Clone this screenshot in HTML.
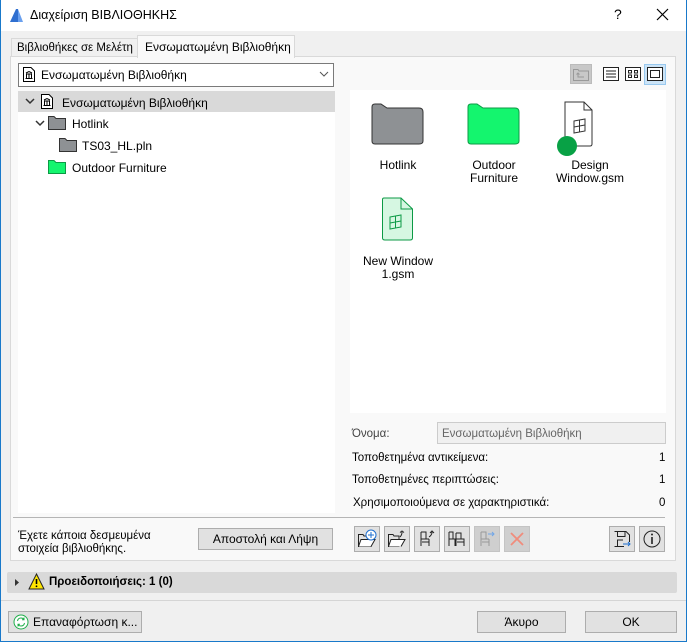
<!DOCTYPE html>
<html><head><meta charset="utf-8"><style>
*{margin:0;padding:0;box-sizing:border-box}
body{width:687px;height:642px;background:#f0f0f0;font-family:"Liberation Sans","DejaVu Sans",sans-serif;font-size:11.5px;color:#000;position:relative;overflow:hidden}
.a{position:absolute}
.btn{position:absolute;background:#e1e1e1;border:1px solid #adadad;text-align:center;font-size:12px}
.ib{position:absolute;width:26px;height:26px;background:#e1e1e1;border:1px solid #adadad;top:526px}
.ib svg{position:absolute;left:2px;top:2px}
.t{position:absolute;white-space:nowrap}
.c{position:absolute;text-align:center;font-size:12px;line-height:13px;width:90px}
</style></head><body>
<div class="a" style="left:0;top:0;width:687px;height:642px;border:1px solid #1979ca;border-top:none"></div>
<div class="a" style="left:1px;top:0;width:685px;height:31px;background:#fff"></div>
<svg class="a" style="left:9px;top:8px" width="15" height="15"><path d="M1 14 L7 1 L9 1 L9 14Z" fill="#2f6fd0"/><path d="M9 1 L14 14 L9 14Z" fill="#6aa0ee"/></svg>
<div class="t" style="left:30px;top:8px;font-size:12.5px">Διαχείριση ΒΙΒΛΙΟΘΗΚΗΣ</div>
<div class="t" style="left:614px;top:6px;font-size:14px">?</div>
<svg class="a" style="left:656px;top:8px" width="13" height="13"><path d="M1 1L12 12M12 1L1 12" stroke="#000" stroke-width="1.2"/></svg>

<div class="a" style="left:11px;top:38px;width:127px;height:19px;background:#f0f0f0;border:1px solid #d9d9d9;border-bottom:none"></div>
<div class="t" style="left:17px;top:42px">Βιβλιοθήκες σε Μελέτη</div>
<div class="a" style="left:10px;top:56px;width:666px;height:505px;background:#f9f9f9;border:1px solid #d9d9d9"></div>
<div class="a" style="left:137px;top:35px;width:158px;height:23px;background:#f9f9f9;border:1px solid #d9d9d9;border-bottom:none"></div>
<div class="t" style="left:145px;top:40px;font-size:12px">Ενσωματωμένη Βιβλιοθήκη</div>

<div class="a" style="left:18px;top:63px;width:316px;height:24px;background:#fff;border:1px solid #7a7a7a"></div>
<svg class="a" style="left:23px;top:67px" width="12" height="15"><path d="M.5 .5H8L11.5 4V14.5H.5Z" fill="#fff" stroke="#000"/><path d="M3 6L6 4.5L9 6M3 7H9M3.5 7.5V11M6 7.5V11M8.5 7.5V11M2.5 11.5H9.5" stroke="#000" fill="none"/></svg>
<div class="t" style="left:41px;top:68px;font-size:12px">Ενσωματωμένη Βιβλιοθήκη</div>
<svg class="a" style="left:319px;top:71px" width="10" height="7"><path d="M1 1L5 5L9 1" stroke="#555" fill="none"/></svg>

<div class="a" style="left:18px;top:91px;width:317px;height:422px;background:#fff"></div>
<div class="a" style="left:18px;top:91px;width:317px;height:21px;background:#d9d9d9"></div>
<svg class="a" style="left:25px;top:98px" width="10" height="7"><path d="M1 1L5 5L9 1" stroke="#333" stroke-width="1.5" fill="none"/></svg>
<svg class="a" style="left:41px;top:94px" width="12" height="15"><path d="M.5 .5H8L11.5 4V14.5H.5Z" fill="#fff" stroke="#000"/><path d="M3 6L6 4.5L9 6M3 7H9M3.5 7.5V11M6 7.5V11M8.5 7.5V11M2.5 11.5H9.5" stroke="#000" fill="none"/></svg>
<div class="t" style="left:62px;top:96px;font-size:12px">Ενσωματωμένη Βιβλιοθήκη</div>
<svg class="a" style="left:35px;top:120px" width="10" height="7"><path d="M1 1L5 5L9 1" stroke="#333" stroke-width="1.5" fill="none"/></svg>
<svg class="a" style="left:48px;top:115px" width="18" height="15"><path d="M.5 1.5H6L8 3.5H17.5V14.5H.5Z" fill="#8e9194" stroke="#333"/></svg>
<div class="t" style="left:72px;top:117px;font-size:12px">Hotlink</div>
<svg class="a" style="left:59px;top:137px" width="18" height="15"><path d="M.5 1.5H6L8 3.5H17.5V14.5H.5Z" fill="#8e9194" stroke="#333"/></svg>
<div class="t" style="left:82px;top:139px;font-size:12px">TS03_HL.pln</div>
<svg class="a" style="left:48px;top:159px" width="18" height="15"><path d="M.5 1.5H6L8 3.5H17.5V14.5H.5Z" fill="#14f56e" stroke="#0c9a45"/></svg>
<div class="t" style="left:72px;top:161px;font-size:12px">Outdoor Furniture</div>

<div class="a" style="left:570px;top:64px;width:22px;height:20px;background:#c8c8c8;border:1px solid #bbb"></div>
<svg class="a" style="left:573px;top:67px" width="16" height="14"><path d="M.5 2.5H5L6 4H15.5V13.5H.5Z" fill="none" stroke="#999"/><path d="M5 6V10H11M3.5 7.5L5 6L6.5 7.5" fill="none" stroke="#999"/></svg>
<svg class="a" style="left:603px;top:67px" width="16" height="14"><rect x=".5" y=".5" width="15" height="13" fill="#fff" stroke="#222"/><path d="M3 4H13M3 7H13M3 10H13" stroke="#222"/></svg>
<svg class="a" style="left:625px;top:67px" width="16" height="14"><rect x=".5" y=".5" width="15" height="13" fill="#fff" stroke="#222"/><rect x="3.5" y="3.5" width="3" height="2.5" fill="none" stroke="#222"/><rect x="9.5" y="3.5" width="3" height="2.5" fill="none" stroke="#222"/><rect x="3.5" y="8" width="3" height="2.5" fill="none" stroke="#222"/><rect x="9.5" y="8" width="3" height="2.5" fill="none" stroke="#222"/></svg>
<div class="a" style="left:644px;top:64px;width:22px;height:21px;background:#cce4f7;border:1px solid #99c9ef"></div>
<svg class="a" style="left:647px;top:67px" width="16" height="14"><rect x=".5" y=".5" width="15" height="13" fill="#fff" stroke="#222"/><rect x="3.5" y="3.5" width="9" height="7" fill="none" stroke="#222"/></svg>

<div class="a" style="left:350px;top:90px;width:316px;height:323px;background:#fff"></div>
<svg class="a" style="left:371px;top:103px" width="53" height="42"><path d="M1 4Q1 1 4 1H10L16 5H48Q52 5 52 9V38Q52 41 48 41H4Q1 41 1 38Z" fill="#8e9194" stroke="#333" stroke-width="1"/></svg>
<div class="c" style="left:353px;top:159px">Hotlink</div>
<svg class="a" style="left:467px;top:103px" width="53" height="42"><path d="M1 4Q1 1 4 1H10L16 5H48Q52 5 52 9V38Q52 41 48 41H4Q1 41 1 38Z" fill="#14f56e" stroke="#0c9a45" stroke-width="1"/></svg>
<div class="c" style="left:449px;top:159px">Outdoor<br>Furniture</div>
<svg class="a" style="left:555px;top:101px" width="57" height="56"><path d="M10 1H29L37 9V43Q37 45 35 45H12Q10 45 10 43Z" fill="#fff" stroke="#333"/><path d="M29 1V9H37" fill="none" stroke="#333"/><path d="M19 20L30 18V30L19 32ZM19 26L30 24M24.5 19V31" fill="none" stroke="#333"/><circle cx="12" cy="45" r="10" fill="#08a145"/></svg>
<div class="c" style="left:545px;top:159px">Design<br>Window.gsm</div>
<svg class="a" style="left:381px;top:197px" width="34" height="45"><path d="M1.5 2.5Q1.5 1 3 1H20L31.5 12V41Q31.5 43 29 43H4Q1.5 43 1.5 41Z" fill="#d6f7e2" stroke="#0c9a45"/><path d="M20 1V12H31.5" fill="none" stroke="#0c9a45"/><path d="M9 20L20 18V30L9 32ZM9 26L20 24M14.5 19V31" fill="none" stroke="#0c9a45"/></svg>
<div class="c" style="left:353px;top:255px">New Window<br>1.gsm</div>

<div class="t" style="left:352px;top:428px;color:#444">Όνομα:</div>
<div class="a" style="left:437px;top:422px;width:229px;height:22px;background:#f0f0f0;border:1px solid #ccc"></div>
<div class="t" style="left:442px;top:428px;color:#666">Ενσωματωμένη Βιβλιοθήκη</div>
<div class="t" style="left:352px;top:452px">Τοποθετημένα αντικείμενα:</div><div class="t" style="left:659px;top:452px">1</div>
<div class="t" style="left:352px;top:474px">Τοποθετημένες περιπτώσεις:</div><div class="t" style="left:659px;top:474px">1</div>
<div class="t" style="left:353px;top:497px">Χρησιμοποιούμενα σε χαρακτηριστικά:</div><div class="t" style="left:659px;top:497px">0</div>

<div class="a" style="left:13px;top:517px;width:652px;height:1px;background:#b5b5b5"></div>
<div class="t" style="left:18px;top:530px;line-height:13px">Έχετε κάποια δεσμευμένα<br>στοιχεία βιβλιοθήκης.</div>
<div class="btn" style="left:198px;top:528px;width:135px;height:22px;line-height:20px">Αποστολή και Λήψη</div>

<div class="ib" style="left:354px"><svg width="20" height="20"><path d="M1.5 5.5H6L7 7H14V17.5H1.5Z" fill="none" stroke="#222"/><path d="M1.5 17.5L4 10.5H18L14 17.5" fill="#fff" stroke="#222"/><circle cx="14" cy="6" r="5" fill="#fff" stroke="#1e6fd0"/><path d="M14 3V9M11 6H17" stroke="#1e6fd0"/></svg></div>
<div class="ib" style="left:384px"><svg width="20" height="20"><path d="M1.5 5.5H6L7 7H12V17.5H1.5Z" fill="none" stroke="#222"/><path d="M1.5 17.5L4 10.5H18L14 17.5" fill="#fff" stroke="#222"/><path d="M13 8Q15 6 15 3M13 3.5L15 2L17 3.5" fill="none" stroke="#222"/></svg></div>
<div class="ib" style="left:414px"><svg width="20" height="20"><path d="M4 3V17M4 10H12M12 10V17M4 3H9V10M5 13H12" fill="none" stroke="#222"/><path d="M12 8Q15 6 15 3M13 4L15 2L17 4" fill="none" stroke="#222"/></svg></div>
<div class="ib" style="left:444px"><svg width="20" height="20"><path d="M2 3V17M2 10H8V17M2 3H6V10M9 4V17M9 10H17V17M9 4H14V10M10 13H17" fill="none" stroke="#222"/></svg></div>
<div class="ib" style="left:474px;background:#cfcfcf;border-color:#c4c4c4"><svg width="20" height="20"><path d="M4 3V17M4 10H12M12 10V17M4 3H9V10M5 13H12" fill="none" stroke="#999"/><path d="M11 5H17M15 3L17 5L15 7" fill="none" stroke="#6fa5e8"/></svg></div>
<div class="ib" style="left:504px;background:#cfcfcf;border-color:#c4c4c4"><svg width="20" height="20"><path d="M4 4L16 16M16 4L4 16" stroke="#f08c7c" stroke-width="1.8"/></svg></div>
<div class="ib" style="left:609px"><svg width="20" height="20"><path d="M2.5 2.5H14L17.5 6V13M12 17.5H2.5Z" fill="none" stroke="#222"/><path d="M5.5 2.5V7.5H13V2.5M5.5 17.5V11H11" fill="none" stroke="#222"/><path d="M11 15H18M16 13L18 15L16 17" fill="none" stroke="#1e6fd0"/></svg></div>
<div class="ib" style="left:639px"><svg width="20" height="20"><circle cx="10" cy="10" r="8" fill="none" stroke="#222"/><path d="M10 8V15" stroke="#222" stroke-width="1.6"/><circle cx="10" cy="5.5" r="1" fill="#222"/></svg></div>

<div class="a" style="left:7px;top:572px;width:670px;height:21px;background:#d9d9d9;border-radius:2px"></div>
<svg class="a" style="left:14px;top:578px" width="6" height="9"><path d="M1 1L5 4.5L1 8Z" fill="#333"/></svg>
<svg class="a" style="left:28px;top:573px" width="17" height="17"><path d="M8.5 1L16 16H1Z" fill="#ffe600" stroke="#222"/><path d="M8.5 6V11" stroke="#000" stroke-width="1.6"/><circle cx="8.5" cy="13.3" r="0.9" fill="#000"/></svg>
<div class="t" style="left:49px;top:576px;font-weight:bold">Προειδοποιήσεις: 1 (0)</div>
<div class="a" style="left:1px;top:600px;width:685px;height:1px;background:#d5d5d5"></div>

<div class="btn" style="left:8px;top:611px;width:134px;height:22px"></div>
<svg class="a" style="left:13px;top:614px" width="16" height="16"><circle cx="8" cy="8" r="7" fill="#fff" stroke="#1fae4a"/><path d="M4.5 7Q5 4 8 4Q10 4 11 5.5M11.5 9Q11 12 8 12Q6 12 5 10.5M11 3.5V5.7H9M5 12.5V10.3H7" fill="none" stroke="#1fae4a"/></svg>
<div class="t" style="left:33px;top:615px;font-size:12px">Επαναφόρτωση κ...</div>
<div class="btn" style="left:477px;top:611px;width:89px;height:22px;line-height:20px">Άκυρο</div>
<div class="btn" style="left:585px;top:611px;width:92px;height:22px;line-height:20px">OK</div>
</body></html>
